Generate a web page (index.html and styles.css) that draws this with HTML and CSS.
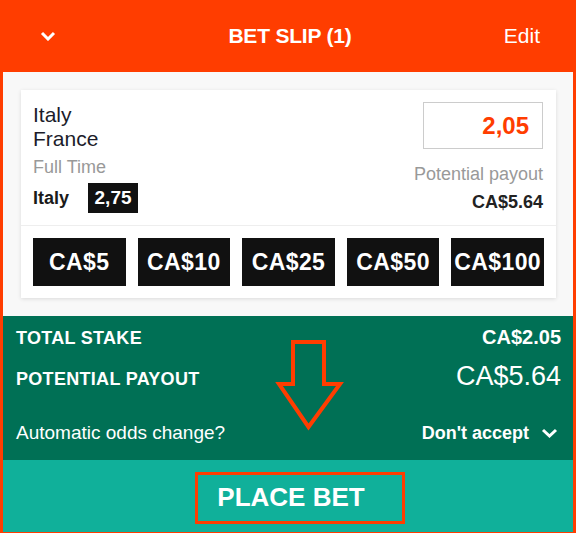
FILE: index.html
```html
<!DOCTYPE html>
<html lang="en">
<head>
    <meta charset="UTF-8">
    <meta name="viewport" content="width=device-width, initial-scale=1.0">
    <title>Bet Slip</title>
    <link rel="stylesheet" href="styles.css">
</head>
<body>
    <div class="slip">
        <div class="slip-header">
            <div class="header-left">
                <svg class="chevron" width="16" height="10" viewBox="0 0 16 10"><path d="M2 2l6 6 6-6" fill="none" stroke="#fff" stroke-width="3"/></svg>
            </div>
            <div class="header-title">BET SLIP (1)</div>
            <div class="header-right">Edit</div>
        </div>

        <div class="slip-body">
            <div class="card">
                <div class="selection">
                    <div class="selection-info">
                        <div class="teams">Italy<br>France</div>
                        <div class="market">Full Time</div>
                        <div class="pick">
                            <span class="pick-name">Italy</span>
                            <span class="odds-badge">2,75</span>
                        </div>
                    </div>
                    <div class="selection-stake">
                        <div class="stake-input">2,05</div>
                        <div class="payout-label">Potential payout</div>
                        <div class="payout-value">CA$5.64</div>
                    </div>
                </div>
                <div class="quick-stakes">
                    <button class="stake-btn">CA$5</button>
                    <button class="stake-btn">CA$10</button>
                    <button class="stake-btn">CA$25</button>
                    <button class="stake-btn">CA$50</button>
                    <button class="stake-btn">CA$100</button>
                </div>
            </div>
        </div>

        <div class="summary">
            <div class="summary-row">
                <span class="summary-label">TOTAL STAKE</span>
                <span class="summary-stake">CA$2.05</span>
            </div>
            <div class="summary-row row-payout">
                <span class="summary-label">POTENTIAL PAYOUT</span>
                <span class="summary-payout">CA$5.64</span>
            </div>
            <div class="summary-row row-odds">
                <span class="odds-question">Automatic odds change?</span>
                <span class="odds-choice">Don't accept
                    <svg width="17" height="10" viewBox="0 0 17 10"><path d="M2 2l6.5 6 6.5-6" fill="none" stroke="#fff" stroke-width="3"/></svg>
                </span>
            </div>
        </div>

        <div class="slip-footer">
            <button class="place-bet">PLACE BET</button>
            <div class="highlight-box"></div>
        </div>

        <svg class="hint-arrow" width="80" height="110" viewBox="0 0 80 110">
            <polygon points="23,12 54,12 54,54 70,54 38.5,97 9,54 23,54" fill="none" stroke="#ff3d00" stroke-width="4" stroke-linejoin="miter"/>
        </svg>
    </div>
</body>
</html>
```

FILE: styles.css
```css
body {
    margin: 0;
    padding: 0;
    font-family: "Liberation Sans", Arial, sans-serif;
    background-color: #ff3d00;
}
.slip {
    position: relative;
    width: 570px;
    height: 532px;
    border-left: 3px solid #ff3d00;
    border-right: 3px solid #ff3d00;
    border-bottom: 1px solid #ff3d00;
    display: flex;
    flex-direction: column;
    background-color: #f8f8f8;
}
.slip-header {
    height: 72px;
    background-color: #ff3d00;
    color: #fff;
    display: grid;
    grid-template-columns: 1fr auto 1fr;
    align-items: center;
    padding: 0 33px 0 37px;
}
.chevron {
    display: block;
    margin-top: -1px;
}
.header-title {
    font-size: 21px;
    font-weight: bold;
    letter-spacing: -0.2px;
}
.header-right {
    justify-self: end;
    font-size: 21px;
}
.slip-body {
    padding: 18px 17px 18px 18px;
}
.card {
    background-color: #fff;
    box-shadow: 0 1px 4px rgba(0, 0, 0, 0.12);
}
.selection {
    display: flex;
    justify-content: space-between;
    padding: 12px 12px 12px 12px;
    border-bottom: 1px solid #eee;
}
.teams {
    font-size: 21px;
    line-height: 24px;
    color: #1c1c2a;
    margin-top: 1px;
}
.market {
    font-size: 18px;
    line-height: 22px;
    color: #999;
    margin-top: 5px;
}
.pick {
    display: flex;
    align-items: center;
    gap: 19px;
    margin-top: 5px;
}
.pick-name {
    font-size: 18px;
    font-weight: bold;
    color: #1a1a1a;
}
.odds-badge {
    display: inline-block;
    width: 50px;
    height: 30px;
    line-height: 30px;
    text-align: center;
    background-color: #111;
    color: #fff;
    font-size: 19px;
    font-weight: bold;
}
.selection-stake {
    text-align: right;
    padding-right: 1px;
}
.stake-input {
    box-sizing: border-box;
    width: 120px;
    height: 47px;
    line-height: 45px;
    border: 1px solid #ccc;
    padding-right: 13px;
    color: #ff3d00;
    font-size: 24px;
    font-weight: bold;
    margin-left: auto;
}
.payout-label {
    margin-top: 14px;
    font-size: 18px;
    line-height: 22px;
    color: #999;
}
.payout-value {
    margin-top: 6px;
    font-size: 18px;
    line-height: 22px;
    font-weight: bold;
    color: #222;
}
.quick-stakes {
    display: flex;
    gap: 12px;
    padding: 12px 12px 12px 12px;
}
.stake-btn {
    flex: 1;
    height: 48px;
    border: none;
    padding: 0;
    background-color: #111;
    color: #fff;
    font-family: "Liberation Sans", Arial, sans-serif;
    font-size: 23px;
    font-weight: bold;
    letter-spacing: 0.4px;
}
.summary {
    flex: 1;
    background-color: #007055;
    color: #fff;
    padding: 10px 12px 0 13px;
}
.summary-row {
    display: flex;
    justify-content: space-between;
    align-items: baseline;
    line-height: 22px;
}
.summary-label {
    font-size: 18px;
    font-weight: bold;
    letter-spacing: 0.3px;
}
.summary-stake {
    font-size: 20px;
    font-weight: bold;
}
.row-payout {
    margin-top: 12px;
    line-height: 30px;
}
.summary-payout {
    font-size: 27px;
}
.row-odds {
    margin-top: 28px;
}
.odds-question {
    font-size: 19px;
}
.odds-choice {
    font-size: 18px;
    font-weight: bold;
    display: flex;
    align-items: center;
    gap: 12px;
    padding-right: 3px;
}
.slip-footer {
    position: relative;
    height: 72px;
    background-color: #10b09a;
    display: flex;
    justify-content: center;
    align-items: center;
}
.place-bet {
    border: none;
    background: none;
    color: #fff;
    font-family: "Liberation Sans", Arial, sans-serif;
    font-size: 26px;
    font-weight: bold;
    padding: 3px 0 0 6px;
}
.highlight-box {
    position: absolute;
    left: 192px;
    top: 12px;
    width: 204px;
    height: 46px;
    border: 3px solid #ff3d00;
}
.hint-arrow {
    position: absolute;
    left: 267px;
    top: 330px;
}
```
